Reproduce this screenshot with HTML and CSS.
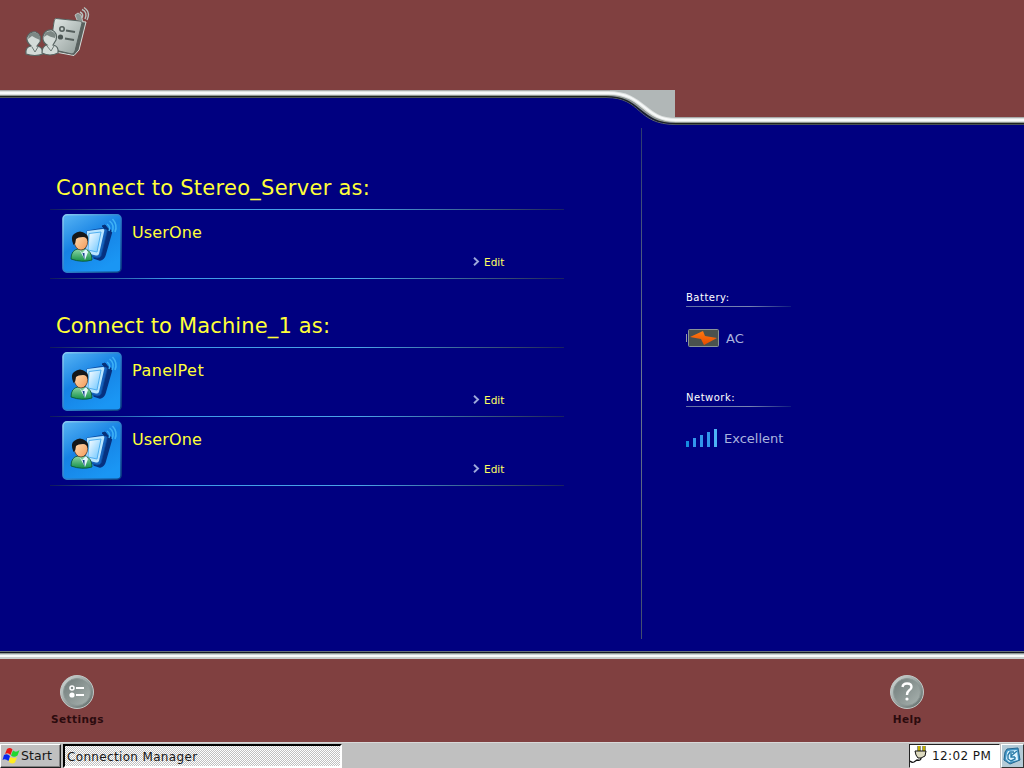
FILE: index.html
```html
<!DOCTYPE html>
<html lang="en">
<head>
<meta charset="utf-8">
<title>Connection Manager</title>
<link rel="stylesheet" href="styles.css">
</head>
<body>
<svg class="defs" aria-hidden="true">
  <defs>
    <linearGradient id="tile" x1="0" y1="0" x2=".6" y2="1"><stop offset="0" stop-color="#58b4f4"/><stop offset=".5" stop-color="#1682e4"/><stop offset="1" stop-color="#1a96f4"/></linearGradient>
    <linearGradient id="rim" x1="0" y1="0" x2="1" y2="1"><stop offset="0" stop-color="#8accf4"/><stop offset=".5" stop-color="#2f83cc"/><stop offset="1" stop-color="#0a3c80"/></linearGradient>
    <linearGradient id="screen" x1="0" y1="0" x2="1" y2="1"><stop offset="0" stop-color="#fff"/><stop offset="1" stop-color="#66c4ff"/></linearGradient>
    <linearGradient id="green" x1="0" y1="0" x2="0" y2="1"><stop offset="0" stop-color="#8ed8a8"/><stop offset="1" stop-color="#159048"/></linearGradient>
    <linearGradient id="skin" x1="0" y1="0" x2="1" y2="1"><stop offset="0" stop-color="#ffe0b8"/><stop offset="1" stop-color="#f49a58"/></linearGradient>
    <linearGradient id="silver" x1="0" y1="0" x2="1" y2="1"><stop offset="0" stop-color="#e6ecea"/><stop offset="1" stop-color="#8f9b98"/></linearGradient>
    <linearGradient id="ring" x1="0" y1="0" x2="1" y2="1"><stop offset="0" stop-color="#d5dddb"/><stop offset="1" stop-color="#5d6967"/></linearGradient>
    <linearGradient id="steel" x1="0" y1="0" x2="1" y2="1"><stop offset="0" stop-color="#707b79"/><stop offset="1" stop-color="#a9b3b0"/></linearGradient>
    <linearGradient id="bolt" x1="0" y1="0" x2="0" y2="1"><stop offset="0" stop-color="#ff7a10"/><stop offset="1" stop-color="#e84a00"/></linearGradient>
    <symbol id="user" viewBox="0 0 60 60">
      <rect x="1" y=".8" width="58" height="57.4" rx="4" fill="url(#tile)" stroke="url(#rim)" stroke-width="1.6"/>
      <path d="M43 14L48 16Q50 17 49 20L43 41Q42 45 38 46L32 44Z" fill="#06317f" stroke="#06317f" stroke-width="1.5" stroke-linejoin="round"/>
      <path d="M25 17L42 14Q46 14 45 18L39 42Q38 44 35 44L24 41Z" fill="#1663bd" stroke="#0b4aa0" stroke-width=".8"/>
      <path d="M25 17L41 15Q43 15 42 18L37 40Q36 42 34 41.500L24 39Z" fill="#b9e5ff"/>
      <path d="M27 19.500L39 18L35 38L26 36Z" fill="url(#screen)" stroke="#4faef0" stroke-width="1"/>
      <path d="M43 15L40 12L43 11L47 16" fill="#063078" stroke="#063078"/>
      <g fill="none" stroke="#3fb2f6" stroke-width="1.500"><path d="M45 10Q49 13 47 17"/><path d="M47.500 7Q53 11 50 18"/><path d="M50.500 5Q56 11 53 18"/></g>
      <path d="M9 45Q9 36 16 35L23 35Q30 37 30 46Q20 49 9 45Z" fill="url(#green)" stroke="#075030" stroke-width=".8"/>
      <path d="M17 35L20 39L24 35L26 38L23 46Z" fill="#e4f7ff"/><path d="M20.500 39L22.500 39L22.500 46Z" fill="#16458c"/>
      <ellipse cx="19" cy="27.500" rx="6.700" ry="8.500" fill="url(#skin)" stroke="#472818" stroke-width=".7"/>
      <path d="M11.500 31Q8 23 12 20Q18 15 24 20Q27 22 26 28Q25 23 21 23Q16 23 14 25Q14 29 11.500 31Z" fill="#151719"/>
    </symbol>
    <symbol id="chevron" viewBox="0 0 7 9"><path d="M1 .8L5 4.5L1 8.2" fill="none" stroke="#9da9da" stroke-width="1.9"/></symbol>
  </defs>
</svg>
<div class="desktop">
  <header class="header">
    <svg class="brand" width="66" height="52" viewBox="24 6 66 52">
      <path d="M55 19L80 21.500L86 22L79 50L74 55.500L50 51Z" fill="#59615f" stroke="#d7dedb" stroke-width="1"/>
      <path d="M56 18.500Q54 19 54 22L50 49L72 54Q74 54 75 51L82 23Q82 21 80 21Z" fill="url(#silver)" stroke="#56605e" stroke-width="1"/>
      <path d="M77 20L75 15L78 13L81 15L83 22" fill="#8b9693" stroke="#cbd2cf" stroke-width=".8"/>
      <g fill="none" stroke="#b7c3c0" stroke-width="1.400"><path d="M80 12Q84 14 82 18"/><path d="M82 9.500Q88 12 85 19"/><path d="M84 7.500Q91 12 87 20"/></g>
      <circle cx="62" cy="29" r="2.200" fill="none" stroke="#555f5d" stroke-width="1.600"/><circle cx="60.500" cy="37" r="2.600" fill="#4b5553"/>
      <path d="M66 30.500L75 32M65 38.500L74 40" stroke="#555f5d" stroke-width="2"/>
      <g stroke="#566260" stroke-width="1.200" fill="#d3dbd8">
        <path d="M26 54Q25 47 31 46Q26 42 27 37Q30 31 36 32Q42 35 40 42L37 46Q43 47 43 54Q35 57 26 54Z"/>
        <path d="M42 53Q42 46 47 45Q42 42 43 36Q45 29 52 30Q58 33 56 40L53 45Q59 46 58 53Q50 57 42 53Z"/>
      </g>
      <path d="M28 39Q28 32 35 32.500Q41 34 40 40Q35 38 32 36ZM44 37Q44 31 51 31Q57 33 55 38Q50 37 47 35Z" fill="#7c8784"/>
      <path d="M32 47L35 52L38 47M47 46L51 51L54 46" fill="none" stroke="#6d7976"/>
    </svg>
  </header>
  <svg class="swoosh" width="1024" height="38" viewBox="0 90 1024 38">
    <path d="M0 95H608C645 95 637 122 676 122H1024V128H0Z" fill="#000080"/>
    <path d="M600 90H675V122C642 122 642 94 604 94Z" fill="#b1b7b7"/>
    <g fill="none">
      <path d="M0 97.5H606C643 97.5 635 124.500 676 124.500H1024" stroke="#596167"/>
      <path d="M0 96.500H606C643 96.500 637 123.500 676 123.500H1024" stroke="#1e241f" stroke-width="1.5"/>
      <path d="M0 95H606C643 95 639 122 676 122H1024" stroke="#8f9692" stroke-width="2"/>
      <path d="M0 93H608C645 93 643 120 676 120H1024" stroke="#dce0df" stroke-width="4"/>
      <path d="M0 93H608C645 93 643 120 676 120H1024" stroke="#f7f9f9" stroke-width="2"/>
      <path d="M0 90.500H610M675 117.500H1024" stroke="#a9aaaa"/>
    </g>
  </svg>
  <main class="main">
    <div class="connections">
      <section class="group">
        <h1 class="title title-server">Connect to Stereo_Server as:</h1>
        <ul class="list">
          <li class="row"><svg class="avatar"><use href="#user"/></svg><span class="name">UserOne</span><a class="edit"><svg class="chevron"><use href="#chevron"/></svg>Edit</a></li>
        </ul>
      </section>
      <section class="group">
        <h1 class="title">Connect to Machine_1 as:</h1>
        <ul class="list">
          <li class="row"><svg class="avatar"><use href="#user"/></svg><span class="name panel">PanelPet</span><a class="edit"><svg class="chevron"><use href="#chevron"/></svg>Edit</a></li>
          <li class="row"><svg class="avatar"><use href="#user"/></svg><span class="name">UserOne</span><a class="edit"><svg class="chevron"><use href="#chevron"/></svg>Edit</a></li>
        </ul>
      </section>
    </div>
    <aside class="status">
      <section class="stat">
        <h2 class="stat-title">Battery:</h2>
        <div class="stat-value"><svg width="34" height="20" viewBox="0 0 34 20"><path d="M.5 6V14" stroke="#9299a5"/><rect x="2.500" y="1.500" width="30" height="17" rx="1" fill="#4a514e" stroke="#899396"/><path d="M4 9L17 3L19 8L31 10L18 17L15 11Z" fill="url(#bolt)"/></svg><span>AC</span></div>
      </section>
      <section class="stat">
        <h2 class="stat-title">Network:</h2>
        <div class="stat-value"><svg width="32" height="20" viewBox="0 0 32 20"><g fill="#3296ec"><path d="M0 13H3V19H0Z" fill="#168cdf"/><path d="M7 10H10V19H7ZM14 7H17V19H14ZM21 4H24V19H21Z"/><path d="M28 1H31V19H28Z" fill="#4cb3f5"/></g></svg><span>Excellent</span></div>
      </section>
    </aside>
  </main>
  <footer class="footer">
    <a class="tool settings"><svg width="36" height="36" viewBox="0 0 36 36"><circle cx="18" cy="18" r="16.500" fill="url(#ring)" stroke="#c1c7c5"/><circle cx="18" cy="18" r="13.500" fill="url(#steel)" stroke="#8c9795"/><circle cx="13" cy="14" r="2" fill="none" stroke="#fff" stroke-width="1.5"/><circle cx="13" cy="21" r="2.600" fill="#fff"/><path d="M17 14H25M17 21H25" stroke="#fff" stroke-width="1.800"/></svg><span>Settings</span></a>
    <a class="tool help"><svg width="36" height="36" viewBox="0 0 36 36"><circle cx="18" cy="18" r="16.500" fill="url(#ring)" stroke="#c1c7c5"/><circle cx="18" cy="18" r="13.500" fill="url(#steel)" stroke="#8c9795"/><path d="M13.500 13Q14 9.500 18 9.500Q22.500 9.500 22.500 13Q22.500 15 20 16.500Q18 18 18 21" fill="none" stroke="#fff" stroke-width="2.400"/><circle cx="18" cy="25" r="1.600" fill="#fff"/></svg><span>Help</span></a>
  </footer>
  <nav class="taskbar">
    <button class="start"><svg width="18" height="18" viewBox="0 0 18 18"><path d="M5 2Q8 0 10.500 2.500L8.500 8Q6 5 3 7Z" fill="#e81818"/><path d="M11 3.500Q14 6 17.500 3L15.500 8.500Q12 11 9 8.500Z" fill="#20d830"/><path d="M2 8Q5 6 8 9L6.500 14Q3 11 .5 13Z" fill="#0828f0"/><path d="M8.500 10Q12 12 15 10L13 15.500Q10 18 6.500 14.500Z" fill="#ffec20"/></svg><span>Start</span></button>
    <div class="task">Connection Manager</div>
    <div class="tray"><svg width="20" height="20" viewBox="0 0 20 20"><g transform="translate(-1 -1)"><path d="M10 1V6M15 1V6" stroke="#292900" stroke-width="3"/><path d="M10 1V6M15 1V6" stroke="#ffe600" stroke-width="1.400"/><path d="M6 6H17L16 11L12 13H9L7 10Z" fill="#dedbc0" stroke="#111"/><path d="M12 13Q12 16 8 15L5 17Q3 18 1 16" fill="none" stroke="#111" stroke-width="1.300"/></g></svg><span class="clock">12:02 PM</span></div>
    <button class="desk"><svg width="18" height="18" viewBox="0 0 18 18"><path d="M4 2L15 1L17 13L7 17L1 13L2 5Z" fill="#4297c8" stroke="#24668e"/><path d="M5 4L14 3L15 13L6 15L3 12L4 6Z" fill="#dff5ff"/><path d="M14 4L8 9M8 6V10H12M11 5H7L5 8V12L8 14L12 12V10" fill="none" stroke="#287ba8" stroke-width="1.400"/></svg></button>
  </nav>
</div>
</body>
</html>
```
FILE: styles.css
```css
* { box-sizing: border-box; }
body { margin: 0; font-family: "DejaVu Sans", Verdana, sans-serif; }
h1, h2, ul { margin: 0; padding: 0; font-weight: 400; list-style: none; }
svg { display: block; flex: none; }
.defs { position: absolute; width: 0; height: 0; }
.desktop { width: 1024px; height: 768px; display: flex; flex-direction: column; background: #804040; overflow: hidden; }
.header { height: 90px; padding: 6px 24px; }
.main { height: 523px; display: flex; background: #000080; }
.connections { width: 641px; padding: 41px 0 0 50px; }
.group { width: 514px; margin-bottom: 28px; }
.title { height: 40px; padding-left: 6px; font-size: 21px; line-height: 38px; color: #ffff38; white-space: nowrap; letter-spacing: .15px; }
.title-server { letter-spacing: .27px; }
.list { padding-top: 1px; background: linear-gradient(90deg, #10185c, #3d9ae8 23%, #4ba4e8 60%, #34486f 90%, #182060) top / 100% 1px no-repeat; }
.row { height: 69px; display: flex; align-items: flex-start; padding: 4px 0 0 12px; background: linear-gradient(90deg, #10185c, #3d9ae8 23%, #4ba4e8 60%, #34486f 90%, #182060) bottom / 100% 1px no-repeat; }
.avatar { width: 60px; height: 60px; }
.name { width: 340px; padding: 9px 0 0 10px; color: #ffff38; font-size: 16px; line-height: 20px; letter-spacing: .13px; }
.panel { letter-spacing: .48px; }
.edit { display: flex; align-items: center; gap: 4px; padding: 40px 0 0 11px; color: #ffff60; font-size: 10.500px; line-height: 16px; }
.chevron { width: 7px; height: 9px; margin-top: -2px; }
.status { width: 383px; padding: 162px 0 0 45px; background: linear-gradient(#2c3a70, #6c7890 50%, #404c70) left top / 1px 511px no-repeat; }
.stat { height: 100px; }
.stat-title { width: 105px; height: 17px; color: #fff; font-size: 10px; line-height: 15px; letter-spacing: .5px; background: linear-gradient(90deg, #6370a6, #7985b3 60%, #101c80) bottom / 100% 1px no-repeat; }
.stat-value { display: flex; align-items: center; height: 20px; margin-top: 21px; gap: 6px; color: #aab3de; font-size: 13px; line-height: 18px; }
.stat-value span { padding-top: 2px; }
.footer { height: 91px; display: flex; justify-content: space-between; padding: 23px 81px 0 41px; background: linear-gradient(#667078 0 1px, #151b25 1px 2px, #8e9797 2px 3px, #cbd3d5 3px 4px, #f7f9f9 4px 6px, #c8cdcd 6px 8px, #804040 8px); }
.tool { width: 72px; display: flex; flex-direction: column; align-items: center; color: #2b0b0e; font-size: 10.500px; font-weight: 700; line-height: 18px; letter-spacing: .4px; }
.settings span { padding-left: 1px; }
.taskbar { height: 26px; display: flex; align-items: center; background: #c0c0c0; border-top: 1px solid #d8d8d8; font-size: 12.500px; color: #161616; }
button { font: inherit; color: inherit; }
.start { width: 61px; height: 24px; display: flex; align-items: center; gap: 1px; padding: 0 1px; background: #c0c0c0; border: 1px solid; border-color: #fff #202020 #202020 #fff; box-shadow: inset -1px -1px #808080; }
.start span { letter-spacing: .1px; }
.task { width: 279px; height: 24px; margin-left: 2px; padding-left: 2px; line-height: 22px; border: 2px solid; border-color: #000 #fff #fff #000; background: repeating-conic-gradient(#fff 0 25%, #c0c0c0 0 50%) 0 0 / 2px 2px; font-size: 12px; letter-spacing: .34px; }
.tray { width: 91px; height: 24px; margin-left: auto; display: flex; align-items: center; gap: 2px; background: #fff; border: 1px solid; border-color: #222 #fff #fff #222; }
.clock { white-space: nowrap; font-size: 12px; letter-spacing: .4px; }
.desk { width: 23px; height: 24px; margin-left: 1px; padding: 1px; background: #b5cbd7; border: 1px solid; border-color: #fff #333 #333 #fff; }
```
